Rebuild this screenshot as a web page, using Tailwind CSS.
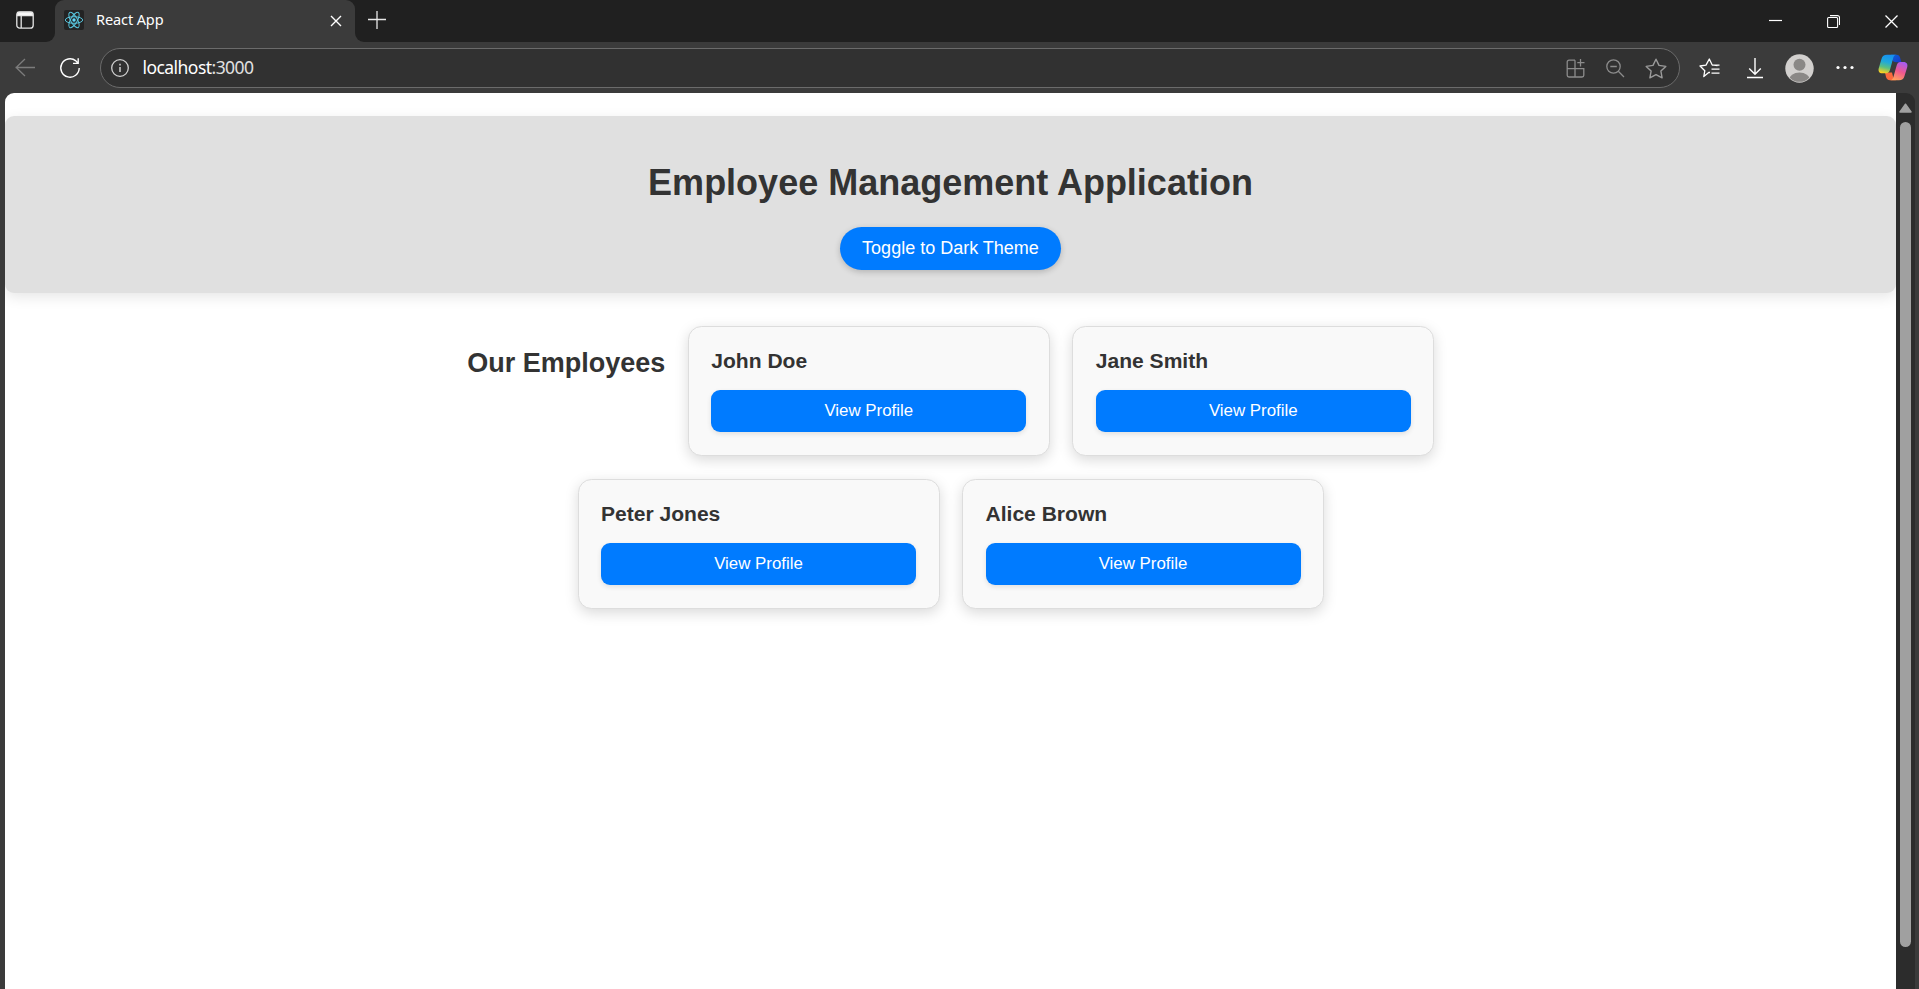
<!DOCTYPE html>
<html lang="en">
<head>
<meta charset="utf-8">
<title>React App</title>
<script src="https://cdn.jsdelivr.net/npm/@tailwindcss/browser@4"></script>
</head>
<body class="h-[989px] w-[1919px] overflow-hidden bg-[#3b3b3b] font-['Liberation_Sans',Arial,sans-serif] text-[#333]">
<div class="flex h-full flex-col">
  <!-- Tab strip -->
  <div class="flex h-[42px] shrink-0 bg-[#3b3b3b] font-['Noto_Sans',sans-serif] text-white">
    <div class="flex w-[55px] rounded-br-[9px] bg-[#202020] pt-[11px] pl-4">
      <svg width="18" height="18" viewBox="0 0 18 18" fill="none" stroke="#e6e6e6" stroke-width="1.3"><rect x=".8" y=".8" width="16.4" height="16.4" rx="3"/><path d="M1.5 1.5h15v3h-15z" fill="#fff"/><path d="M5.2 5v12"/></svg>
    </div>
    <div class="bg-[#202020]"><div class="flex h-[42px] w-[300px] items-start rounded-t-[9px] bg-[#3b3b3b] pl-[9px]">
      <svg class="mt-[10px]" width="20" height="20" viewBox="0 0 20 20"><rect width="20" height="20" rx="2" fill="#232323"/><g fill="none" stroke="#58c4dc" stroke-width="1"><ellipse cx="10" cy="10" rx="8.7" ry="3.3"/><ellipse cx="10" cy="10" rx="8.7" ry="3.3" transform="rotate(60 10 10)"/><ellipse cx="10" cy="10" rx="8.7" ry="3.3" transform="rotate(120 10 10)"/></g><circle cx="10" cy="10" r="1.7" fill="#61dafb"/></svg>
      <span class="mt-[8px] ml-3 w-[230px] text-[14.5px] leading-[22px] tracking-[-0.1px]">React App</span>
      <svg class="mt-[15px] ml-[4px]" width="12" height="12" viewBox="0 0 12 12" stroke="#fff" stroke-width="1.4"><path d="M1 1l10 10M11 1L1 11"/></svg>
    </div></div>
    <div class="flex flex-1 rounded-bl-[9px] bg-[#202020] pl-[13px]">
      <svg class="mt-[11px]" width="18" height="18" viewBox="0 0 18 18" stroke="#e8e8e8" stroke-width="1.3"><path d="M9 0v18M0 8.5h18"/></svg>
      <div class="ml-auto flex pr-[21px]">
        <svg class="mt-[14px]" width="13" height="13" viewBox="0 0 13 13" stroke="#fff" stroke-width="1.2"><path d="M0 6.5h13"/></svg>
        <svg class="mt-[15px] ml-[45px]" width="13" height="13" viewBox="0 0 13 13" fill="none" stroke="#fff" stroke-width="1.1"><rect x=".6" y="2.5" width="10" height="10" rx="1"/><path d="M3 .6h7.5a2 2 0 0 1 2 2V10"/></svg>
        <svg class="mt-[15px] ml-[45px]" width="13" height="13" viewBox="0 0 13 13" stroke="#fff" stroke-width="1.3"><path d="M.5 .5l12 12M12.500 .5l-12 12"/></svg>
      </div>
    </div>
  </div>
  <!-- Toolbar -->
  <div class="flex h-[51px] shrink-0 pt-[6px] text-white">
    <svg class="mt-[10px] ml-[15px]" width="20" height="19" viewBox="0 0 20 19" fill="none" stroke="#7c7c7c" stroke-width="1.3"><path d="M.5 9.500H20M10 1L1.200 9.500 10 18"/></svg>
    <svg class="mt-[9px] ml-[24px]" width="22" height="22" viewBox="0 0 22 22" fill="none" stroke="#fff" stroke-width="1.400"><path d="M20.200 11a9.200 9.200 0 1 1-3.300-7.100L19 6.200M19.200 1.200v5.200h-5.200"/></svg>
    <div class="ml-[19px] flex h-10 w-[1580px] rounded-full border border-[#6b6b6b] bg-[#313131] pl-[10px]">
      <svg class="mt-[10px]" width="18" height="18" viewBox="0 0 18 18" fill="none" stroke="#d0d0d0" stroke-width="1.300"><circle cx="9" cy="9" r="8.300"/><path d="M9 8v5M9 4.800v1.600" stroke-width="1.500"/></svg>
      <span class="mt-[6px] ml-[13.500px] font-['Noto_Sans',sans-serif] text-[17.5px] leading-[25px] tracking-[-0.55px]">localhost<span class="text-[#e0e0e0]">:3000</span></span>
      <div class="mr-[12px] ml-auto flex">
        <svg class="mt-[10px]" width="19" height="19" viewBox="0 0 18 19" fill="none" stroke="#8c8c8c" stroke-width="1.300"><path d="M8.500 1.200H2.500A1.800 1.800 0 0 0 .7 3v13.200A1.800 1.800 0 0 0 2.500 18h13a1.800 1.800 0 0 0 1.800-1.800V9.700H.7M8.500 1.200V18M14 0v7.500M10.800 3.700H18"/></svg>
        <svg class="mt-[10px] ml-[21px]" width="19" height="19" viewBox="0 0 19 19" fill="none" stroke="#8c8c8c" stroke-width="1.300"><circle cx="7.500" cy="7.500" r="6.700"/><path d="M12.300 12.300l5.700 5.700M4.300 7.500h6.500"/></svg>
        <svg class="mt-[9px] ml-[20px]" width="22" height="21" viewBox="0 0 22 21" fill="none" stroke="#9a9a9a" stroke-width="1.400" stroke-linejoin="round"><path d="M11 1.200l3 6.200 6.800 1-4.900 4.700 1.200 6.700-6.100-3.200-6.100 3.200 1.200-6.700L1.200 8.400l6.800-1z"/></svg>
      </div>
    </div>
    <svg class="mt-[10px] ml-[19px]" width="21" height="20" viewBox="0 0 21 20" fill="none" stroke="#fff" stroke-width="1.300" stroke-linejoin="round"><path d="M11 14.500l-1-.2-5.200 4.200 1-5.800L1 8l6-.9L10.300 1l2.800 5.800 5.400.8M13 7.200h7.500M12.500 11.200h8M12.500 15.200h8"/></svg>
    <svg class="mt-[10px] ml-[27px]" width="16" height="21" viewBox="0 0 16 21" fill="none" stroke="#fff" stroke-width="1.400"><path d="M8 0v16M2.200 10.500L8 16.200l5.800-5.700M0 19.500h16"/></svg>
    <svg class="mt-[6px] ml-[22px]" width="29" height="29" viewBox="0 0 29 29"><defs><clipPath id="av"><circle cx="14.500" cy="14.500" r="13.300"/></clipPath></defs><circle cx="14.500" cy="14.500" r="14.200" fill="#d2d0ce"/><g fill="#8a8886" clip-path="url(#av)"><circle cx="14.500" cy="10.700" r="6"/><ellipse cx="14.500" cy="26" rx="10.500" ry="7.500"/></g></svg>
    <svg class="mt-[17px] ml-[22px]" width="18" height="5" viewBox="0 0 18 5" fill="#fff"><circle cx="2" cy="2.500" r="1.600"/><circle cx="9" cy="2.500" r="1.600"/><circle cx="16" cy="2.500" r="1.600"/></svg>
    <svg class="mt-[6px] ml-[24px]" width="30" height="27" viewBox="0 0 30 27"><defs>
      <linearGradient id="c1" x1=".6" y1="0" x2=".35" y2="1"><stop offset="0" stop-color="#1790f0"/><stop offset=".4" stop-color="#1fa8dc"/><stop offset=".7" stop-color="#5cc080"/><stop offset="1" stop-color="#ffd21f"/></linearGradient>
      <linearGradient id="c2" x1=".7" y1="0" x2=".3" y2="1"><stop offset="0" stop-color="#a65cf0"/><stop offset=".5" stop-color="#f0588e"/><stop offset="1" stop-color="#ffa25c"/></linearGradient>
      <linearGradient id="c3" x1="0" y1="0" x2="1" y2="1"><stop offset="0" stop-color="#0a63d8"/><stop offset="1" stop-color="#1a38c8"/></linearGradient></defs>
      <path d="M13 .8h5.500c2 0 3 1 3.600 3l1.300 4.500h-5c-2.500 0-3.800-1-4.400-3z" fill="url(#c3)"/>
      <path d="M7 18.500h7l1 4c.5 2 1.500 3.700 3.500 3.700H12c-2.300 0-3.400-1.200-4-3.200z" fill="#fb6a3c"/>
      <path d="M9 .8H18.500c-2 0-2.800 1.500-3.300 3.200L12 15.700c-.6 2-1.700 3.600-3.900 3.600H4.500c-3.500 0-4.500-2.300-3.700-5.300L3.500 5C4.300 2.200 6 .8 9 .8z" fill="url(#c1)"/>
      <path d="M21 26.200H12c2 0 2.900-1.500 3.400-3.200l3.200-11.200c.6-2 1.700-3.700 3.900-3.700H25.500c3.300 0 4.500 2.300 3.700 5.200l-2.700 8.600c-.8 2.900-2.500 4.300-5.500 4.300z" fill="url(#c2)"/></svg>
  </div>
  <!-- Viewport -->
  <div class="flex min-h-0 flex-1 pr-1 pl-[5px]">
    <main class="w-[1891px] overflow-hidden rounded-tl-[9px] bg-white pt-[23px]">
      <header class="flex h-[177px] flex-col items-center rounded-[9px] bg-[#e0e0e0] pt-[45.500px] shadow-[0_4px_14px_rgba(0,0,0,0.1)]">
        <h1 class="text-[36px] leading-[41px] font-bold">Employee Management Application</h1>
        <button class="mt-[24.500px] h-[43px] w-[221px] rounded-full bg-[#007bff] pb-[2px] text-[18px] leading-5 whitespace-nowrap text-white shadow-[0_2px_6px_rgba(0,0,0,0.2)]">Toggle to Dark Theme</button>
      </header>
      <section class="flex flex-wrap items-start justify-center gap-[22.5px] pr-[399.5px] pl-[400px] pt-[32.600px]">
        <h2 class="pt-[22.400px] text-[27px] leading-[31px] font-bold">Our Employees</h2>
        <article class="h-[130.5px] w-[362px] rounded-[13.5px] border border-[#ddd] bg-[#f9f9f9] px-[22.5px] pt-[22.5px] shadow-[0_4px_14px_rgba(0,0,0,0.15)]">
          <h3 class="text-[21.06px] leading-[24px] font-bold">John Doe</h3>
          <button class="mt-[17px] h-[42px] w-full rounded-[9px] bg-[#007bff] pb-[1px] text-[16.875px] leading-5 text-white shadow-[0_2px_5px_rgba(0,0,0,0.1)]">View Profile</button>
        </article>
        <article class="h-[130.5px] w-[362px] rounded-[13.5px] border border-[#ddd] bg-[#f9f9f9] px-[22.5px] pt-[22.5px] shadow-[0_4px_14px_rgba(0,0,0,0.15)]">
          <h3 class="text-[21.06px] leading-[24px] font-bold">Jane Smith</h3>
          <button class="mt-[17px] h-[42px] w-full rounded-[9px] bg-[#007bff] pb-[1px] text-[16.875px] leading-5 text-white shadow-[0_2px_5px_rgba(0,0,0,0.1)]">View Profile</button>
        </article>
        <article class="h-[130.5px] w-[362px] rounded-[13.5px] border border-[#ddd] bg-[#f9f9f9] px-[22.5px] pt-[22.5px] shadow-[0_4px_14px_rgba(0,0,0,0.15)]">
          <h3 class="text-[21.06px] leading-[24px] font-bold">Peter Jones</h3>
          <button class="mt-[17px] h-[42px] w-full rounded-[9px] bg-[#007bff] pb-[1px] text-[16.875px] leading-5 text-white shadow-[0_2px_5px_rgba(0,0,0,0.1)]">View Profile</button>
        </article>
        <article class="h-[130.5px] w-[362px] rounded-[13.5px] border border-[#ddd] bg-[#f9f9f9] px-[22.5px] pt-[22.5px] shadow-[0_4px_14px_rgba(0,0,0,0.15)]">
          <h3 class="text-[21.06px] leading-[24px] font-bold">Alice Brown</h3>
          <button class="mt-[17px] h-[42px] w-full rounded-[9px] bg-[#007bff] pb-[1px] text-[16.875px] leading-5 text-white shadow-[0_2px_5px_rgba(0,0,0,0.1)]">View Profile</button>
        </article>
      </section>
    </main>
    <div class="flex w-[19px] flex-col rounded-tr-[9px] bg-[#2c2c2c] pt-[10px] pl-[3px]">
      <svg width="13" height="10" viewBox="0 0 13 10"><path d="M6.500 1.200L12 9H1z" fill="#a0a0a0" stroke="#a0a0a0" stroke-width="1.500" stroke-linejoin="round"/></svg>
      <div class="mt-[9px] ml-px h-[825px] w-[11px] rounded-full bg-[#a0a0a0]"></div>
    </div>
  </div>
</div>
</body>
</html>
